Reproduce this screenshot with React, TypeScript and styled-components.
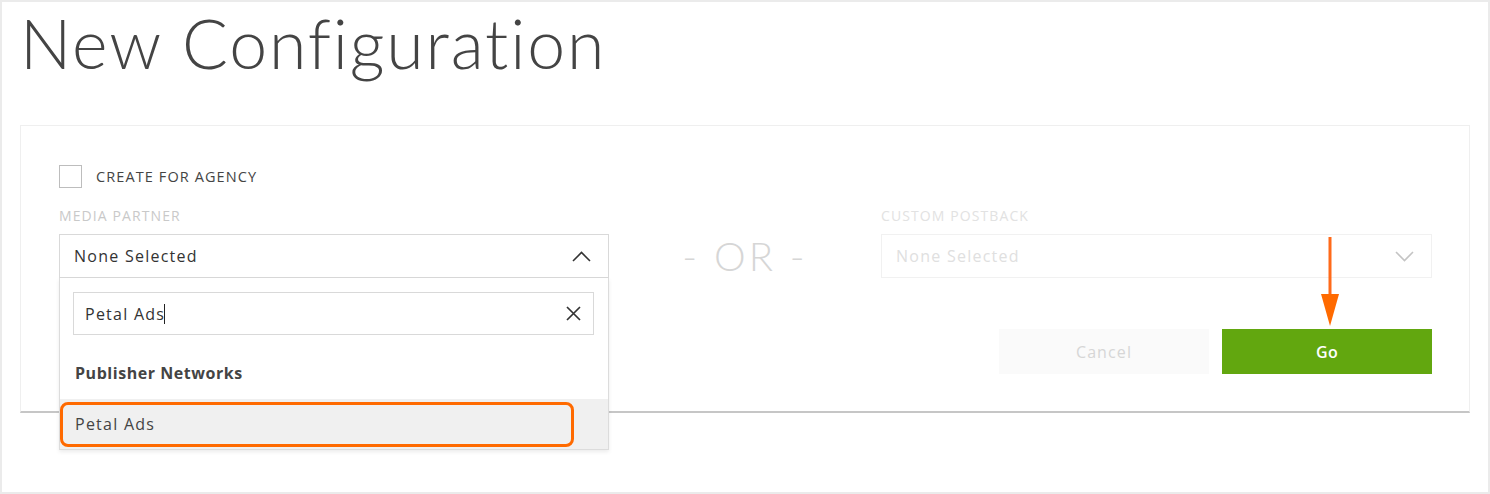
import React from "react";
import styled, { createGlobalStyle } from "styled-components";

const GlobalStyle = createGlobalStyle`
  html, body {
    margin: 0;
    padding: 0;
    background: #ffffff;
  }
  * {
    box-sizing: border-box;
  }
`;

const Frame = styled.div`
  width: 1490px;
  height: 494px;
  border: 2px solid #ebebeb;
  padding: 0 18px 0 18px;
  font-family: "Open Sans", "Noto Sans", sans-serif;
  color: #333;
  overflow: hidden;
`;

const Title = styled.h1`
  margin: 0;
  padding: 1px 0 0 0;
  height: 123px;
  font-family: "Lato", "Open Sans", sans-serif;
  font-weight: 300;
  font-size: 68px;
  line-height: 80px;
  letter-spacing: 1.85px;
  color: #444;
`;

const Card = styled.div`
  position: relative;
  height: 288px;
  border: 1px solid #efefef;
  border-bottom: 2px solid #c6c6c6;
  padding: 39px 37px 0 38px;
`;

const CheckRow = styled.label`
  display: flex;
  align-items: center;
  gap: 14px;
  height: 23px;
  font-size: 14.5px;
  color: #444;
  letter-spacing: 1.1px;
`;

const CheckBox = styled.span`
  width: 23px;
  height: 23px;
  border: 1px solid #bdbdbd;
  background: #fff;
`;

const Columns = styled.div`
  display: grid;
  grid-template-columns: 550px 272px 551px;
  margin-top: 20px;
`;

const Field = styled.div`
  position: relative;
`;

const FieldLabel = styled.div<{ $faint?: boolean }>`
  height: 26px;
  font-size: 14px;
  line-height: 16px;
  letter-spacing: 1.1px;
  color: ${({ $faint }) => ($faint ? "#e2e2e2" : "#c9c9c9")};
`;

const SelectBox = styled.div<{ $faint?: boolean }>`
  display: flex;
  align-items: center;
  justify-content: space-between;
  height: 44px;
  padding: 0 17px 0 14px;
  border: 1px solid ${({ $faint }) => ($faint ? "#f1f1f1" : "#d9d9d9")};
  background: #fff;
  font-size: 16px;
  letter-spacing: 1.25px;
  color: ${({ $faint }) => ($faint ? "#e0e0e0" : "#333")};
`;

const OrText = styled.div`
  display: flex;
  align-items: center;
  justify-content: center;
  height: 44px;
  margin-top: 26px;
  font-family: "Lato", sans-serif;
  font-weight: 300;
  font-size: 40px;
  color: #d6d6d6;
  letter-spacing: 3px;
`;

const Dropdown = styled.div`
  position: absolute;
  left: 0;
  right: 0;
  top: 70px;
  background: #fff;
  border: 1px solid #dcdcdc;
  border-top: none;
  box-shadow: 0 2px 4px rgba(0, 0, 0, 0.08);
  z-index: 2;
`;

const SearchWrap = styled.div`
  padding: 14px 14px 0 13px;
`;

const SearchBox = styled.div`
  display: flex;
  align-items: center;
  justify-content: space-between;
  height: 43px;
  padding: 0 12px 0 11px;
  border: 1px solid #d9d9d9;
  font-size: 16px;
  letter-spacing: 1.25px;
  color: #333;
`;

const Caret = styled.span`
  display: inline-block;
  width: 1px;
  height: 20px;
  margin-left: -1px;
  background: #222;
  vertical-align: -4px;
`;

const GroupHeader = styled.div`
  padding: 27px 15px 0;
  height: 64px;
  font-size: 16px;
  font-weight: 700;
  color: #444;
  letter-spacing: 0.55px;
`;

const Option = styled.div`
  position: relative;
  display: flex;
  align-items: center;
  height: 50px;
  padding: 0 15px;
  background: #f0f0f0;
  font-size: 16px;
  letter-spacing: 1.25px;
  color: #444;
`;

const Highlight = styled.span`
  position: absolute;
  left: 0;
  top: 3px;
  width: 514px;
  height: 45px;
  border: 3px solid #ff6a00;
  border-radius: 8px;
`;

const Actions = styled.div`
  display: flex;
  justify-content: flex-end;
  gap: 13px;
  margin-top: 51px;
`;

const Button = styled.button<{ $primary?: boolean }>`
  width: 210px;
  height: 45px;
  border: none;
  font-family: "Open Sans", sans-serif;
  font-size: 16px;
  letter-spacing: ${({ $primary }) => ($primary ? "0.4px" : "1.1px")};
  background: ${({ $primary }) => ($primary ? "#62a70f" : "#fafafa")};
  color: ${({ $primary }) => ($primary ? "#ffffff" : "#d6d6d6")};
  font-weight: ${({ $primary }) => ($primary ? 600 : 400)};
`;

const Arrow = styled.svg`
  position: absolute;
  left: 1299px;
  top: 110px;
`;

const Chevron = ({ up, color }: { up?: boolean; color: string }) => (
  <svg width="19" height="11" viewBox="0 0 19 11">
    <path
      d={up ? "M1 10 L9.5 1.5 L18 10" : "M1 1 L9.5 9.5 L18 1"}
      fill="none"
      stroke={color}
      strokeWidth="1.6"
    />
  </svg>
);

const CloseIcon = () => (
  <svg width="15" height="15" viewBox="0 0 15 15">
    <path d="M1 1 L14 14 M14 1 L1 14" stroke="#333" strokeWidth="1.7" />
  </svg>
);

export default function App() {
  return (
    <>
      <GlobalStyle />
      <Frame>
        <Title>New Configuration</Title>
        <Card>
          <CheckRow>
            <CheckBox />
            CREATE FOR AGENCY
          </CheckRow>
          <Columns>
            <Field>
              <FieldLabel>MEDIA PARTNER</FieldLabel>
              <SelectBox>
                None Selected
                <Chevron up color="#333" />
              </SelectBox>
              <Dropdown>
                <SearchWrap>
                  <SearchBox>
                    <span>
                      Petal Ads
                      <Caret />
                    </span>
                    <CloseIcon />
                  </SearchBox>
                </SearchWrap>
                <GroupHeader>Publisher Networks</GroupHeader>
                <Option>
                  Petal Ads
                  <Highlight />
                </Option>
              </Dropdown>
            </Field>
            <OrText>- OR -</OrText>
            <Field>
              <FieldLabel $faint>CUSTOM POSTBACK</FieldLabel>
              <SelectBox $faint>
                None Selected
                <Chevron color="#c4c4c4" />
              </SelectBox>
              <Actions>
                <Button>Cancel</Button>
                <Button $primary>Go</Button>
              </Actions>
            </Field>
          </Columns>
          <Arrow width="20" height="92" viewBox="0 0 20 92">
            <rect x="8.5" y="1" width="3" height="62" fill="#ff6a1a" />
            <path d="M1 58 L19 58 L10 90 Z" fill="#ff6a00" />
          </Arrow>
        </Card>
      </Frame>
    </>
  );
}
